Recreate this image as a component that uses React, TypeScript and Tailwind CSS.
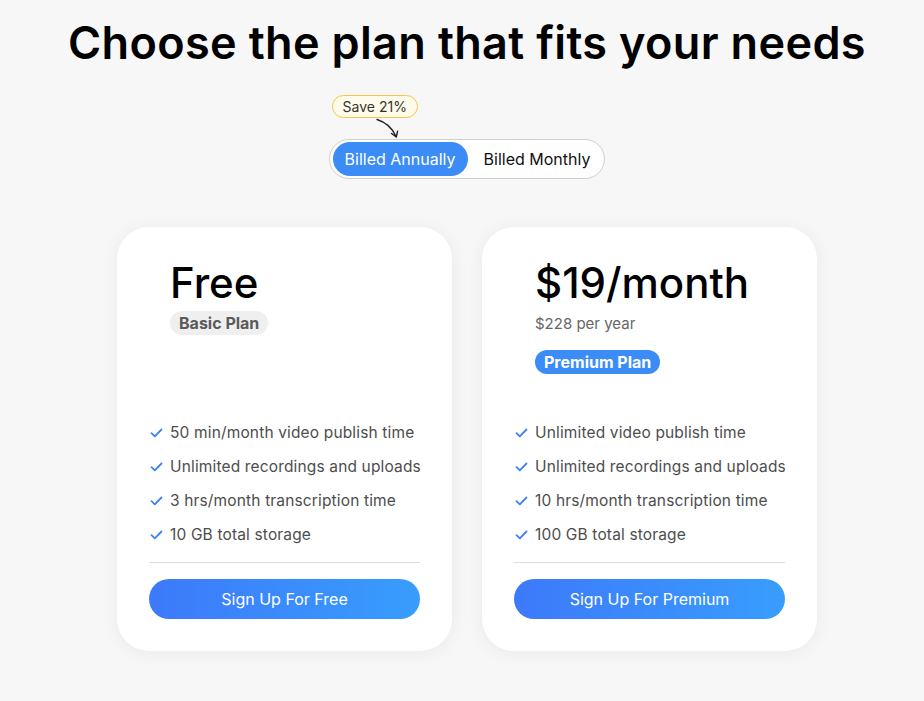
import React from "react";

const font = { fontFamily: "Inter, 'Noto Sans', sans-serif" };

function Check() {
  return (
    <svg width="13" height="10" viewBox="0 0 13 10" fill="none" className="shrink-0">
      <path d="M1.5 5.2 L4.8 8.3 L11.5 1.5" stroke="#3b82f6" strokeWidth="1.8" strokeLinecap="round" strokeLinejoin="round" />
    </svg>
  );
}

type Plan = {
  id: string;
  price: string;
  sub?: string;
  badge: string;
  badgeClass: string;
  features: string[];
  cta: string;
};

const plans: Plan[] = [
  {
    id: "free",
    price: "Free",
    badge: "Basic Plan",
    badgeClass: "bg-[#efefef] text-[#5a5a5a] mt-[4px]",
    features: [
      "50 min/month video publish time",
      "Unlimited recordings and uploads",
      "3 hrs/month transcription time",
      "10 GB total storage",
    ],
    cta: "Sign Up For Free",
  },
  {
    id: "premium",
    price: "$19/month",
    sub: "$228 per year",
    badge: "Premium Plan",
    badgeClass: "bg-[#3b8cf6] text-white mt-[16px]",
    features: [
      "Unlimited video publish time",
      "Unlimited recordings and uploads",
      "10 hrs/month transcription time",
      "100 GB total storage",
    ],
    cta: "Sign Up For Premium",
  },
];

export default function App() {
  return (
    <div className="min-h-screen bg-[#f7f7f7] flex flex-col items-center pt-[16px] pl-[10px]" style={font}>
      <h1 className="text-[45px] leading-[54px] font-semibold text-black tracking-[0.35px]">
        Choose the plan that fits your needs
      </h1>

      <div className="relative mt-[25px] flex flex-col items-start">
        <span className="ml-[3px] h-[23px] px-[10px] flex items-center rounded-full border border-[#f3c64d] bg-[#fffbea] text-[14px] text-[#333]">
          Save 21%
        </span>
        <svg className="absolute left-[45px] top-[23px]" width="28" height="22" viewBox="0 0 28 22" fill="none">
          <path d="M3 1.5 C 11 4, 18 9, 22 18.5" stroke="#222" strokeWidth="1.4" strokeLinecap="round" />
          <path d="M17.5 15.5 L22.3 19 L23.6 13.2" stroke="#222" strokeWidth="1.4" strokeLinecap="round" strokeLinejoin="round" />
        </svg>
        <div className="mt-[21px] h-[40px] flex items-center px-[3px] rounded-full border border-[#cfcfcf] bg-white">
          <button className="h-[34px] px-[12px] rounded-full bg-[#3b8cf6] text-white text-[16px]">
            Billed Annually
          </button>
          <button className="h-[34px] pl-[16px] pr-[11px] rounded-full text-[#111] text-[16px]">
            Billed Monthly
          </button>
        </div>
      </div>

      <div className="mt-[48px] flex gap-[30px]">
        {plans.map((p) => (
          <div
            key={p.id}
            className="w-[335px] h-[424px] bg-white rounded-[32px] shadow-[0_2px_18px_rgba(0,0,0,0.06)] flex flex-col px-8 pt-[32px] pb-8"
          >
            <div className="pl-[21px] flex flex-col items-start">
              <div className="text-[42px] leading-[48px] font-medium text-black">{p.price}</div>
              {p.sub && <div className="mt-[7px] text-[15px] leading-[20px] text-[#666]">{p.sub}</div>}
              <span className={`h-[24px] px-[9px] flex items-center rounded-full text-[16px] font-bold ${p.badgeClass}`}>
                {p.badge}
              </span>
            </div>

            <ul className="mt-auto flex flex-col">
              {p.features.map((f) => (
                <li
                  key={f}
                  className="h-[34px] flex items-center gap-[7px] pl-[1px] text-[15.5px] tracking-[0.15px] whitespace-nowrap text-[#4d4d4d]"
                >
                  <Check />
                  {f}
                </li>
              ))}
            </ul>
            <div className="mt-[10px] h-px bg-[#dedede]" />
            <button className="mt-[16px] h-[40px] rounded-full bg-gradient-to-r from-[#3d79fa] to-[#389dfd] text-white text-[16px]">
              {p.cta}
            </button>
          </div>
        ))}
      </div>
    </div>
  );
}
